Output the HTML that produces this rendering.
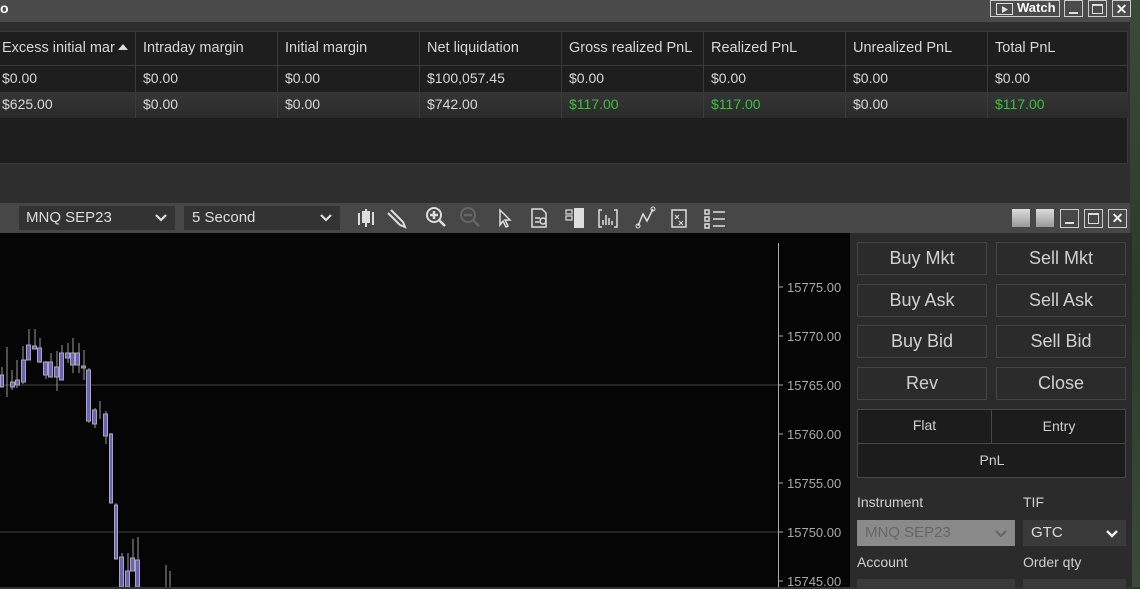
<!DOCTYPE html>
<html><head><meta charset="utf-8"><style>
*{margin:0;padding:0;box-sizing:border-box}
body{width:1140px;height:587px;overflow:hidden;background:#2f362f;font-family:"Liberation Sans",sans-serif;color:#d8d8d8;position:relative}
.a{position:absolute}
.t{font-size:14px;white-space:nowrap}
.btn{position:absolute;border:1px solid #444;background:#2b2b2b;color:#d0d0d0;font-size:18px;text-align:center;line-height:31px}
.lbl{position:absolute;font-size:14px;color:#d0d0d0}
.wb{position:absolute;border:1px solid #ccc;width:19px;height:17px;top:0}
.chev{position:absolute;right:8px;top:8px}
</style></head><body>
<div class="a" style="left:1130px;top:0;width:10px;height:587px;background:linear-gradient(#3c4a3a,#2b3b2b,#3b4a38)"></div>
<div class="a" style="left:0;top:0;width:1130px;height:22px;background:#4b4b4b"></div>
<div class="a t" style="left:0;top:0;font-weight:bold;color:#fff">o</div>
<div class="a" style="left:990px;top:0;width:70px;height:17px;border:1px solid #ccc;color:#fff;font-size:13px;font-weight:bold;line-height:14px;padding-left:26px">Watch</div>
<div class="a" style="left:996px;top:3px;width:17px;height:12px;border:1px solid #ddd"></div>
<svg class="a" style="left:1001px;top:5px" width="8" height="9"><path d="M1 1l6 3.5-6 3.5z" fill="#ddd"/></svg>
<div class="wb" style="left:1064px"><div class="a" style="left:4px;top:11px;width:9px;height:2px;background:#ddd"></div></div>
<div class="wb" style="left:1088px"><div class="a" style="left:3px;top:3px;width:11px;height:10px;border:1px solid #ddd;border-top-width:2px"></div></div>
<div class="wb" style="left:1112px;color:#eee;font-size:14px;font-weight:bold;text-align:center;line-height:16px">✕</div>
<div class="a" style="left:0;top:22px;width:1130px;height:181px;background:#2e2e2e"></div>
<div class="a" style="left:0;top:31px;width:1128px;height:133px;background:#1e1e1e;border:1px solid #3a3a3a;border-left:none"></div>
<div class="a" style="left:0;top:65px;width:1128px;height:1px;background:#3a3a3a"></div>
<div class="a" style="left:0;top:92px;width:1128px;height:26px;background:linear-gradient(#363636,#2a2a2a)"></div>
<div id="tbl"></div>
<div class="a" style="left:0;top:203px;width:1130px;height:30px;background:#474747"></div>
<div class="a" style="left:19px;top:206px;width:156px;height:24px;background:#333;font-size:15px;color:#ddd;padding:3px 0 0 7px">MNQ SEP23<svg class="chev" width="12" height="8"><path d="M1 1l5 5 5-5" stroke="#ddd" stroke-width="2.2" fill="none"/></svg></div>
<div class="a" style="left:184px;top:206px;width:156px;height:24px;background:#333;font-size:15px;color:#ddd;padding:3px 0 0 8px">5 Second<svg class="chev" width="12" height="8"><path d="M1 1l5 5 5-5" stroke="#ddd" stroke-width="2.2" fill="none"/></svg></div>
<svg class="a" style="left:350px;top:203px" width="390" height="30" fill="none" stroke="#ddd" stroke-width="2">
<path d="M9 10v12M16 6v18M23 9v13" /><rect x="13" y="9" width="6" height="10" fill="#ddd"/>
<path d="M41 7l12 12M38 10l12 12M53 19l2 5-5-2" />
<circle cx="84" cy="12" r="7"/><path d="M80 12h8M84 8v8M89 17l6 6" stroke-width="2.5"/>
<g stroke="#666"><circle cx="118" cy="12" r="7"/><path d="M114 12h8M123 17l6 6" stroke-width="2.5"/></g>
<path d="M150 7v15l3-4 3 6 2-1-3-6h5z" stroke-width="1.5"/>
<path d="M182 6h10l4 4v14h-14z M185 15h5M185 19h4" stroke-width="1.5"/><circle cx="193" cy="18" r="3" stroke-width="1.5"/>
<rect x="216" y="7" width="6" height="4" stroke-width="1.2"/><rect x="216" y="13" width="6" height="4" stroke-width="1.2"/><rect x="225" y="6" width="8" height="18" fill="#ddd"/>
<path d="M252 7h-3v17h3M264 7h3v17h-3M253 22v-5M256 22v-10M259 22v-7M262 22v-4" stroke-width="1.5"/>
<path d="M288 23l5-12 4 7 6-12" stroke-width="1.5"/><circle cx="288" cy="23" r="2" stroke-width="1"/><circle cx="303" cy="6" r="2" stroke-width="1"/>
<rect x="322" y="7" width="14" height="17" stroke-width="1.5"/><path d="M325 12l4 4M329 12l-4 4M329 18l4 4M333 18l-4 4" stroke-width="1"/>
<path d="M355 7h4v4h-4zM355 14h4v4h-4zM355 21h4v4h-4zM363 9h12M363 16h12M363 23h12" stroke-width="1.5"/>
</svg>
<div class="a" style="left:1012px;top:209px;width:18px;height:18px;background:linear-gradient(#ddd,#999)"></div>
<div class="a" style="left:1036px;top:209px;width:18px;height:18px;background:linear-gradient(#ddd,#999)"></div>
<div class="wb" style="left:1060px;top:209px;height:19px"><div class="a" style="left:4px;top:12px;width:9px;height:2px;background:#ddd"></div></div>
<div class="wb" style="left:1084px;top:209px;height:19px"><div class="a" style="left:3px;top:3px;width:11px;height:11px;border:1px solid #ddd;border-top-width:2px"></div></div>
<div class="wb" style="left:1108px;top:209px;height:19px;color:#eee;font-size:14px;font-weight:bold;text-align:center;line-height:17px">✕</div>
<div class="a" style="left:0;top:233px;width:850px;height:354px;background:#050505"></div>
<div class="a" style="left:850px;top:233px;width:282px;height:354px;background:#2b2b2b"></div>
<svg class="a" style="left:0;top:233px" width="850" height="354">
<path d="M0 152H778M0 299H778" stroke="#444" stroke-width="1"/>
<path d="M778.5 10V354" stroke="#aaa"/>
<g fill="#aaa" font-family="Liberation Sans" font-size="13">
<text x="787" y="59">15775.00</text><text x="787" y="108">15770.00</text><text x="787" y="157">15765.00</text><text x="787" y="206">15760.00</text><text x="787" y="255">15755.00</text><text x="787" y="304">15750.00</text><text x="787" y="353">15745.00</text>
</g>
<path d="M778 54h5M778 103h5M778 152h5M778 201h5M778 250h5M778 299h5M778 348h5" stroke="#aaa"/>
<g stroke="#999" stroke-width="1">
<path d="M2 134v20M7 114v50M12 137v20M17 127v28M23 113v38M29 96v30M35 96v20M40 105v25M46 128v18M51 120v22M57 118v40M62 112v35M68 110v20M73 105v35M79 110v30M84 117v30M89 135v55M95 175v20M100 168v18M106 178v33M111 200v70M116 270v55M122 320v34M128 320v34M133 306v20M138 304v50M166 332v22M170 338v16"/>
</g>
<g fill="#6a5fc2" stroke="#aaa" stroke-width="1">
<rect x="0.5" y="142" width="3" height="12"/><rect x="10.5" y="149" width="4" height="5"/><rect x="15.5" y="147" width="4" height="5"/><rect x="21.5" y="127" width="4" height="22"/><rect x="26.5" y="112" width="4" height="15"/><rect x="32.5" y="113" width="4" height="3"/><rect x="37.5" y="115" width="4" height="14"/><rect x="43.5" y="129" width="4" height="13"/><rect x="48.5" y="129" width="4" height="15"/><rect x="54.5" y="134" width="4" height="10"/><rect x="59.5" y="120" width="4" height="27"/><rect x="65.5" y="120" width="4" height="5"/><rect x="70.5" y="120" width="4" height="12"/><rect x="75.5" y="120" width="4" height="12"/><rect x="81.5" y="133" width="4" height="2"/><rect x="86.5" y="137" width="4" height="51"/><rect x="92.5" y="177" width="4" height="14"/><rect x="103.5" y="181" width="4" height="22"/><rect x="109.5" y="201" width="3" height="69"/><rect x="114.5" y="272" width="3" height="54"/><rect x="119.5" y="324" width="4" height="30"/><rect x="125.5" y="338" width="4" height="16"/><rect x="130.5" y="325" width="4" height="13"/><rect x="135.5" y="327" width="4" height="27"/>
</g>
</svg>
<div class="btn" style="left:857px;top:242px;width:130px;height:33px">Buy Mkt</div>
<div class="btn" style="left:996px;top:242px;width:130px;height:33px">Sell Mkt</div>
<div class="btn" style="left:857px;top:284px;width:130px;height:33px">Buy Ask</div>
<div class="btn" style="left:996px;top:284px;width:130px;height:33px">Sell Ask</div>
<div class="btn" style="left:857px;top:325px;width:130px;height:33px">Buy Bid</div>
<div class="btn" style="left:996px;top:325px;width:130px;height:33px">Sell Bid</div>
<div class="btn" style="left:857px;top:367px;width:130px;height:33px">Rev</div>
<div class="btn" style="left:996px;top:367px;width:130px;height:33px">Close</div>
<div class="a" style="left:857px;top:409px;width:269px;height:69px;background:#1c1c1c;border:1px solid #474747"></div>
<div class="a" style="left:857px;top:443px;width:269px;height:1px;background:#474747"></div>
<div class="a" style="left:991px;top:409px;width:1px;height:34px;background:#474747"></div>
<div class="lbl" style="left:858px;top:417px;width:133px;text-align:center">Flat</div>
<div class="lbl" style="left:992px;top:418px;width:134px;text-align:center">Entry</div>
<div class="lbl" style="left:858px;top:452px;width:268px;text-align:center">PnL</div>
<div class="lbl" style="left:857px;top:494px">Instrument</div>
<div class="lbl" style="left:1023px;top:494px">TIF</div>
<div class="a" style="left:857px;top:520px;width:158px;height:26px;background:#8a8a8a;color:#666;font-size:15px;padding:4px 0 0 8px">MNQ SEP23<svg class="chev" style="top:10px" width="12" height="8"><path d="M1 1l5 5 5-5" stroke="#666" stroke-width="2.2" fill="none"/></svg></div>
<div class="a" style="left:1023px;top:520px;width:103px;height:26px;background:#3a3a3a;color:#ddd;font-size:15px;padding:4px 0 0 8px">GTC<svg class="chev" style="top:10px" width="12" height="8"><path d="M1 1l5 5 5-5" stroke="#eee" stroke-width="2.4" fill="none"/></svg></div>
<div class="lbl" style="left:857px;top:554px">Account</div>
<div class="lbl" style="left:1023px;top:554px">Order qty</div>
<div class="a" style="left:857px;top:579px;width:158px;height:10px;background:#3a3a3a"></div>
<div class="a" style="left:1023px;top:579px;width:103px;height:10px;background:#3a3a3a"></div>
<script>
var cols=[0,135,277,419,561,703,845,987,1128];
var h=["Excess initial mar","Intraday margin","Initial margin","Net liquidation","Gross realized PnL","Realized PnL","Unrealized PnL","Total PnL"];
var r1=["$0.00","$0.00","$0.00","$100,057.45","$0.00","$0.00","$0.00","$0.00"];
var r2=["$625.00","$0.00","$0.00","$742.00","$117.00","$117.00","$0.00","$117.00"];
var g=[0,0,0,0,1,1,0,1],s="";
for(var i=0;i<8;i++){var x=cols[i];
if(i>0)s+='<div class="a" style="left:'+x+'px;top:31px;width:1px;height:87px;background:#3a3a3a"></div>';
s+='<div class="a t" style="left:'+(x+2+(i?6:0))+'px;top:40px;font-size:14.5px">'+h[i]+'</div>';
s+='<div class="a t" style="left:'+(x+2+(i?6:0))+'px;top:70px">'+r1[i]+'</div>';
s+='<div class="a t" style="left:'+(x+2+(i?6:0))+'px;top:96px;color:'+(g[i]?'#3cc03c':'#d8d8d8')+'">'+r2[i]+'</div>';}
s+='<div class="a" style="left:118px;top:44px;width:0;height:0;border:5px solid transparent;border-bottom:6px solid #ddd;border-top:0"></div>';
document.getElementById('tbl').innerHTML=s;
</script>
</body></html>
